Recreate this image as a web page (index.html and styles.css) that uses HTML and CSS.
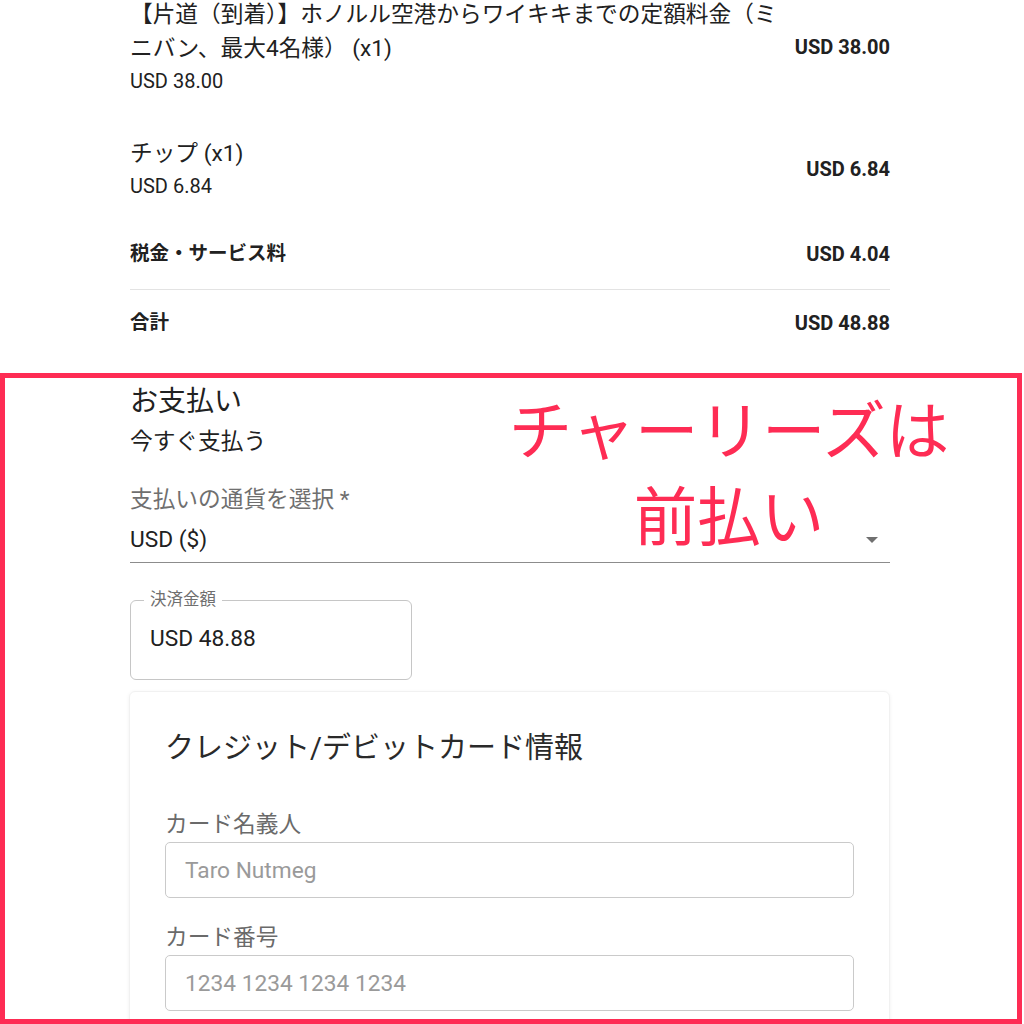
FILE: index.html
```html
<!DOCTYPE html>
<html lang="ja">
<head>
<meta charset="utf-8">
<link rel="stylesheet" href="styles.css">
</head>
<body>
<div class="summary">
  <div class="item">
    <div class="item-text">
      <div class="item-title">【片道（到着）】ホノルル空港からワイキキまでの定額料金（ミニバン、最大4名様） (x1)</div>
      <div class="item-sub">USD 38.00</div>
    </div>
    <div class="price">USD 38.00</div>
  </div>
  <div class="item item-tip">
    <div class="item-text">
      <div class="item-title">チップ (x1)</div>
      <div class="item-sub">USD 6.84</div>
    </div>
    <div class="price">USD 6.84</div>
  </div>
  <div class="line tax">
    <div class="bold">税金・サービス料</div>
    <div class="price">USD 4.04</div>
  </div>
  <div class="line total">
    <div class="bold">合計</div>
    <div class="price">USD 48.88</div>
  </div>
</div>

<section class="payment">
  <div class="note">チャーリーズは<br>前払い</div>
  <h2 class="pay-title">お支払い</h2>
  <div class="pay-sub">今すぐ支払う</div>

  <div class="select-field">
    <div class="select-label">支払いの通貨を選択 *</div>
    <div class="select-row">
      <span class="select-value">USD ($)</span>
      <span class="caret"></span>
    </div>
  </div>

  <div class="outlined">
    <span class="outlined-label">決済金額</span>
    <span class="outlined-value">USD 48.88</span>
  </div>

  <div class="card">
    <div class="card-title">クレジット/デビットカード情報</div>
    <div class="card-label first">カード名義人</div>
    <div class="card-input">Taro Nutmeg</div>
    <div class="card-label">カード番号</div>
    <div class="card-input">1234 1234 1234 1234</div>
  </div>
</section>
</body>
</html>
```

FILE: styles.css
```css
html, body {
  margin: 0;
  padding: 0;
  overflow: hidden;
  background: #ffffff;
}

body {
  font-family: Roboto, "Noto Sans CJK JP", sans-serif;
  color: #212121;
  width: 1024px;
  height: 1024px;
}

.summary {
  padding: 0 134px 0 130px;
  margin-top: -2px;
  height: 375px;
}

.item {
  display: flex;
  justify-content: space-between;
  align-items: center;
}

.item-text {
  flex: none;
  width: 664px;
}

.item-title {
  font-size: 22.7px;
  line-height: 34px;
}

.item-sub {
  font-size: 20px;
  line-height: 30px;
}

.item-tip {
  margin-top: 41px;
}

.price {
  font-size: 20px;
  font-weight: 700;
  line-height: 30px;
  white-space: nowrap;
}

.line {
  display: flex;
  justify-content: space-between;
  align-items: center;
}

.bold {
  font-size: 19.5px;
  font-weight: 700;
  line-height: 30px;
}

.tax {
  margin-top: 38px;
  padding-bottom: 20px;
  border-bottom: 1.5px solid #e3e3e3;
}

.total {
  padding-top: 18px;
}

.payment {
  position: relative;
  box-sizing: border-box;
  width: 1022px;
  height: 651px;
  border: 5px solid #fe2c54;
  padding: 4px 127px 0 125px;
  overflow: hidden;
}

.note {
  position: absolute;
  top: 5px;
  left: 495px;
  width: 458px;
  text-align: center;
  font-family: "Noto Sans CJK JP", sans-serif;
  font-size: 63.5px;
  line-height: 86px;
  color: #fe2c54;
}

.pay-title {
  margin: 0;
  font-size: 28px;
  font-weight: 400;
  line-height: 40px;
}

.pay-sub {
  margin-top: 3px;
  font-size: 22.7px;
  line-height: 34px;
}

.select-field {
  margin-top: 24px;
  border-bottom: 1.5px solid #8c8c8c;
  padding-bottom: 5px;
}

.select-label {
  font-size: 22.7px;
  line-height: 34px;
  color: #6f6f6f;
}

.select-row {
  margin-top: 6px;
  display: flex;
  justify-content: space-between;
  align-items: center;
  padding-right: 12px;
}

.select-value {
  font-size: 22.7px;
  line-height: 34px;
}

.caret {
  width: 0;
  height: 0;
  border-left: 6px solid transparent;
  border-right: 6px solid transparent;
  border-top: 6px solid #707070;
}

.outlined {
  position: relative;
  box-sizing: border-box;
  width: 282px;
  height: 80px;
  margin-top: 37px;
  border: 1.5px solid #c6c6c6;
  border-radius: 6px;
  padding: 0 19px;
  display: flex;
  align-items: center;
}

.outlined-label {
  position: absolute;
  top: -13px;
  left: 13px;
  padding: 0 6px;
  background: #ffffff;
  font-size: 16.5px;
  line-height: 24px;
  color: #6f6f6f;
}

.outlined-value {
  font-size: 22.7px;
  line-height: 34px;
  margin-top: -2px;
}

.card {
  margin-top: 11px;
  margin-left: -1px;
  padding: 36px 35px 40px 35px;
  border-radius: 6px;
  border: 1px solid #f1f1f1;
  box-shadow: 0 1px 4px rgba(0, 0, 0, 0.06);
}

.card-title {
  font-size: 29px;
  line-height: 40px;
  color: #2a2a2a;
}

.card-label {
  margin-top: 23px;
  font-size: 22.7px;
  line-height: 34px;
  color: #6a6a6a;
  margin-bottom: 0;
}

.card-label.first {
  margin-top: 40px;
  margin-bottom: 0;
}

.card-input {
  box-sizing: border-box;
  height: 56px;
  border: 1.5px solid #cacaca;
  border-radius: 5px;
  padding: 0 19px;
  display: flex;
  align-items: center;
  font-size: 22.7px;
  color: #9a9a9a;
}
```
